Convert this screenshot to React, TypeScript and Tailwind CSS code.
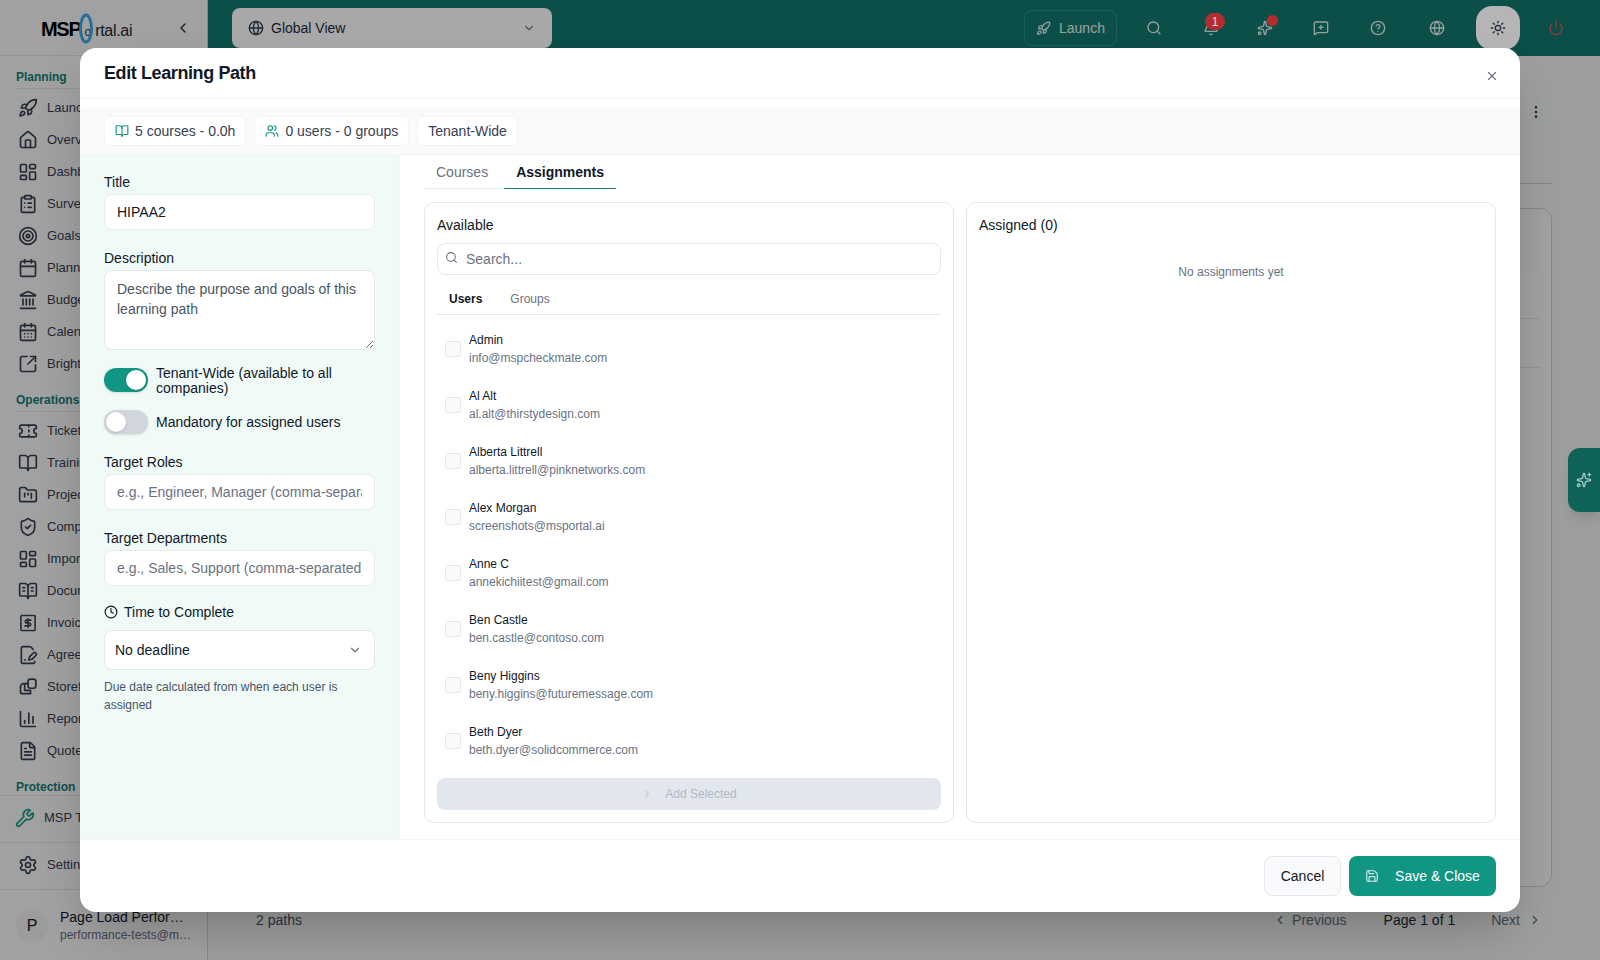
import React from "react";
import {
  Rocket, House, LayoutDashboard, ClipboardList, Target, Calendar, Landmark, CalendarDays, SquareArrowOutUpRight,
  Ticket, BookOpen, FolderKanban, ShieldCheck, BookOpenText, FilePenLine, ChartColumn, FileText, Wrench, Settings,
  ChevronLeft, ChevronRight, ChevronDown, Globe, Search, Bell, Sparkles, MessageSquarePlus, CircleHelp, Sun, Power,
  X, Users, Clock, Save, EllipsisVertical,
} from "lucide-react";

const InvoiceIcon = (p: { size?: number }) => (
  <svg width={p.size ?? 20} height={p.size ?? 20} viewBox="0 0 24 24" fill="none" stroke="currentColor" strokeWidth="2" strokeLinecap="round" strokeLinejoin="round">
    <rect x="3.5" y="3" width="17" height="18" rx="1" strokeDasharray="2 1.2" />
    <path d="M15.5 8.5h-5a1.75 1.75 0 0 0 0 3.5h3a1.75 1.75 0 0 1 0 3.5h-5" />
    <path d="M12 7v10" />
  </svg>
);

const StoreIcon = (p: { size?: number }) => (
  <svg width={p.size ?? 20} height={p.size ?? 20} viewBox="0 0 24 24" fill="none" stroke="currentColor" strokeWidth="2" strokeLinecap="round" strokeLinejoin="round">
    <rect x="12" y="2.5" width="9.5" height="11" rx="3" />
    <path d="M12 8H8v8h7v4H5a2 2 0 0 1-2-2v-6" />
    <path d="M3 12a4 4 0 0 1 4-4" />
  </svg>
);

type NavItem = { label: string; icon: React.ElementType };

const planning: NavItem[] = [
  { label: "Launchpad", icon: Rocket },
  { label: "Overview", icon: House },
  { label: "Dashboards", icon: LayoutDashboard },
  { label: "Surveys", icon: ClipboardList },
  { label: "Goals", icon: Target },
  { label: "Planner", icon: Calendar },
  { label: "Budgets", icon: Landmark },
  { label: "Calendar", icon: CalendarDays },
  { label: "BrightGauge", icon: SquareArrowOutUpRight },
];

const operations: NavItem[] = [
  { label: "Tickets", icon: Ticket },
  { label: "Training", icon: BookOpen },
  { label: "Projects", icon: FolderKanban },
  { label: "Compliance", icon: ShieldCheck },
  { label: "Imports", icon: LayoutDashboard },
  { label: "Documents", icon: BookOpenText },
  { label: "Invoices", icon: InvoiceIcon },
  { label: "Agreements", icon: FilePenLine },
  { label: "Storefront", icon: StoreIcon },
  { label: "Reports", icon: ChartColumn },
  { label: "Quotes", icon: FileText },
];

const people = [
  ["Admin", "info@mspcheckmate.com"],
  ["Al Alt", "al.alt@thirstydesign.com"],
  ["Alberta Littrell", "alberta.littrell@pinknetworks.com"],
  ["Alex Morgan", "screenshots@msportal.ai"],
  ["Anne C", "annekichiitest@gmail.com"],
  ["Ben Castle", "ben.castle@contoso.com"],
  ["Beny Higgins", "beny.higgins@futuremessage.com"],
  ["Beth Dyer", "beth.dyer@solidcommerce.com"],
];

function NavRow({ item }: { item: NavItem }) {
  const Icon = item.icon;
  return (
    <div className="flex h-8 items-center gap-[9px] pl-[18px] text-[13px] text-gray-700">
      <span className="flex w-5 justify-center text-gray-700">
        <Icon size={20} />
      </span>
      <span className="whitespace-nowrap">{item.label}</span>
    </div>
  );
}

function Sidebar() {
  return (
    <aside className="flex h-[960px] w-[208px] shrink-0 flex-col border-r border-gray-300 bg-white">
      <div className="relative flex h-14 shrink-0 items-center border-b border-gray-200 pl-[41px] pt-[2px]">
        <span className="whitespace-nowrap text-[16px] leading-none tracking-[-0.3px] text-gray-800">
          <span className="text-[20px] font-bold tracking-[-1.3px] text-black">MSP</span>
          <span className="ml-[4px] mr-[4px] text-[12px] tracking-normal">o</span>rtal.ai
        </span>
        <svg className="absolute left-[76px] top-[13px]" width="20" height="31" viewBox="0 0 20 31" fill="none">
          <ellipse cx="10" cy="15.5" rx="5.5" ry="13.5" stroke="#3fb0f5" strokeWidth="3" />
        </svg>
        <ChevronLeft size={16} className="absolute left-[175px] top-5 text-gray-800" />
      </div>
      <div className="h-[739px] shrink-0 overflow-hidden">
        <div className="mx-4 mt-[11px] h-[22px] border-b border-gray-200 text-xs font-semibold leading-5 text-[#14837a]">Planning</div>
        <div className="mt-[3px]">
          {planning.map((i) => (
            <NavRow key={i.label} item={i} />
          ))}
        </div>
        <div className="mx-4 mt-[10px] h-[22px] border-b border-gray-200 text-xs font-semibold leading-5 text-[#14837a]">Operations</div>
        <div className="mt-[3px]">
          {operations.map((i) => (
            <NavRow key={i.label} item={i} />
          ))}
        </div>
        <div className="mx-4 mt-[10px] h-[20px] text-xs font-semibold leading-5 text-[#14837a]">Protection</div>
      </div>
      <div className="flex h-[47px] shrink-0 items-center gap-[9px] border-t border-gray-200 pb-[2px] pl-[15px] text-[13px] text-gray-700">
        <Wrench size={20} className="text-[#14a08e]" />
        <span className="whitespace-nowrap">MSP Tools</span>
      </div>
      <div className="flex h-[47px] shrink-0 items-center gap-[9px] border-t border-gray-200 pb-[2px] pl-[18px] text-[13px] text-gray-700">
        <Settings size={20} />
        <span>Settings</span>
      </div>
      <div className="flex flex-1 items-start gap-3 border-t border-gray-200 pl-4 pt-[17px]">
        <div className="mt-[3px] flex h-8 w-8 shrink-0 items-center justify-center rounded-full bg-[#f8f8f8] text-base text-gray-900">P</div>
        <div className="w-[132px] min-w-0">
          <div className="truncate text-sm leading-[20px] text-gray-900">Page Load Performance</div>
          <div className="truncate text-xs leading-[17px] text-gray-500">performance-tests@msportal.ai</div>
        </div>
      </div>
    </aside>
  );
}

function TopBar() {
  const icon = "text-[#f0fffb]";
  return (
    <header className="flex h-14 shrink-0 items-center justify-between bg-[#147d72] pl-6 pr-2">
      <div className="relative z-[41] flex h-10 w-[320px] items-center rounded-lg bg-[#a8a8a8] pl-4 pr-4 text-sm text-gray-900">
        <Globe size={16} className="text-gray-800" />
        <span className="ml-[7px]">Global View</span>
        <ChevronDown size={14} className="ml-auto text-gray-600" />
      </div>
      <div className="flex items-center">
        <div className="flex h-9 w-[93px] items-center gap-2 rounded-lg border border-[#2a9b8f] pl-[11px] text-sm text-[#f0fffb]">
          <Rocket size={15} />
          <span>Launch</span>
        </div>
        <div className="flex w-[74px] justify-center">
          <Search size={16} className={icon} />
        </div>
        <div className="relative flex w-[40px] justify-center">
          <Bell size={16} className={icon} />
          <span className="absolute left-[14px] top-[-7px] z-[41] flex h-[17px] w-5 items-center justify-center rounded-full bg-[#b32d2f] text-xs text-[#f0d8d8]">1</span>
        </div>
        <div className="relative flex w-[68px] justify-center">
          <Sparkles size={16} className={icon} />
          <span className="absolute left-[36px] top-[-5px] z-[41] h-[11px] w-[11px] rounded-full bg-[#b32d2f]" />
        </div>
        <div className="flex w-[44px] justify-center">
          <MessageSquarePlus size={16} className={icon} />
        </div>
        <div className="flex w-[70px] justify-center">
          <CircleHelp size={16} className={icon} />
        </div>
        <div className="flex w-[48px] justify-center">
          <Globe size={16} className={icon} />
        </div>
        <div className="relative z-[41] ml-[15px] flex h-11 w-11 items-center justify-center rounded-2xl bg-[#b5b5b5] text-gray-800">
          <Sun size={16} />
        </div>
        <div className="flex w-[72px] justify-center">
          <Power size={16} className="text-[#e85c5c]" />
        </div>
      </div>
    </header>
  );
}

function Page() {
  return (
    <main className="flex min-w-0 flex-1 flex-col bg-[#f9fafb]">
      <TopBar />
      <div className="mx-12 flex h-[128px] shrink-0 items-start justify-end border-b border-gray-300">
        <EllipsisVertical size={16} className="mr-2 mt-[48px] text-gray-700" />
      </div>
      <div className="mx-12 mt-6 h-[679px] shrink-0 rounded-xl border border-gray-300 bg-white pr-[11px]">
        <div className="h-[62px] bg-gray-50" />
        <div className="h-[48px] border-b border-gray-200" />
        <div className="h-[49px] border-b border-gray-200" />
      </div>
      <div className="mx-12 flex h-[66px] items-center text-sm">
        <span className="text-gray-600">2 paths</span>
        <div className="ml-auto flex items-center text-gray-500">
          <ChevronLeft size={14} />
          <span className="ml-[5px]">Previous</span>
          <span className="ml-[37px] text-gray-800">Page 1 of 1</span>
          <span className="ml-[36px]">Next</span>
          <ChevronRight size={14} className="ml-2 mr-[10px]" />
        </div>
      </div>
    </main>
  );
}

function Field({ label, placeholder, value }: { label: string; placeholder?: string; value?: string }) {
  return (
    <div>
      <div className="text-sm leading-5 text-gray-900">{label}</div>
      <input
        readOnly
        defaultValue={value}
        placeholder={placeholder}
        className="mt-[2px] block h-9 w-full rounded-lg border border-[#e8edec] bg-white px-3 text-sm text-gray-900 outline-none placeholder:text-gray-500"
      />
    </div>
  );
}

function Toggle({ on }: { on: boolean }) {
  return (
    <span className={`flex h-6 w-11 shrink-0 items-center rounded-full p-[2px] shadow-sm ${on ? "justify-end bg-[#129684]" : "justify-start bg-gray-300"}`}>
      <span className="h-5 w-5 rounded-full bg-white shadow" />
    </span>
  );
}

function LeftPanel() {
  return (
    <div className="w-[320px] shrink-0 border-r border-gray-100 bg-[#f0faf7] px-6 pt-[17px]">
      <Field label="Title" value="HIPAA2" />
      <div className="mt-[18px]">
        <div className="text-sm leading-5 text-gray-900">Description</div>
        <textarea
          readOnly
          placeholder="Describe the purpose and goals of this learning path"
          className="mt-[2px] block h-[80px] w-full rounded-lg border border-gray-200 bg-white px-3 py-2 text-sm leading-5 outline-none placeholder:text-gray-600"
        />
      </div>
      <div className="mt-[18px] flex h-6 items-center gap-2">
        <Toggle on />
        <span className="mt-[1px] text-sm leading-[15px] text-gray-900">Tenant-Wide (available to all companies)</span>
      </div>
      <div className="mt-[18px] flex h-6 items-center gap-2">
        <Toggle on={false} />
        <span className="text-sm leading-[14px] text-gray-900">Mandatory for assigned users</span>
      </div>
      <div className="mt-[18px]">
        <Field label="Target Roles" placeholder="e.g., Engineer, Manager (comma-separated)" />
      </div>
      <div className="mt-[18px]">
        <Field label="Target Departments" placeholder="e.g., Sales, Support (comma-separated)" />
      </div>
      <div className="mt-[16px] flex h-5 items-center gap-[6px] text-sm text-gray-900">
        <Clock size={14} />
        <span>Time to Complete</span>
      </div>
      <div className="mt-2 flex h-[40px] items-center justify-between rounded-lg border border-gray-200 bg-white pl-[10px] pr-3 text-sm text-gray-900">
        <span>No deadline</span>
        <ChevronDown size={14} className="text-gray-500" />
      </div>
      <p className="mt-[8px] text-xs leading-[18px] text-gray-600">Due date calculated from when each user is assigned</p>
    </div>
  );
}

function Available() {
  return (
    <section className="flex w-[530px] flex-col rounded-[10px] border border-gray-200 p-3">
      <div className="text-sm leading-5 text-gray-900">Available</div>
      <div className="relative mt-2">
        <Search size={13} className="absolute left-2 top-2 text-gray-500" />
        <input
          readOnly
          placeholder="Search..."
          className="block h-8 w-full rounded-lg border border-gray-200 pl-7 pr-3 text-sm outline-none placeholder:text-gray-500"
        />
      </div>
      <div className="mt-2 flex h-8 gap-1 border-b border-gray-200 text-xs">
        <div className="flex items-center px-3 font-semibold text-gray-900">Users</div>
        <div className="flex items-center px-3 text-gray-500">Groups</div>
      </div>
      <ul className="mt-[6px] flex-1">
        {people.map(([name, mail]) => (
          <li key={mail} className="flex h-14 items-center gap-2 px-2">
            <span className="h-4 w-4 shrink-0 rounded-[3px] border border-gray-200 bg-gray-50" />
            <span className="text-xs leading-[18px]">
              <span className="block text-gray-900">{name}</span>
              <span className="block text-gray-500">{mail}</span>
            </span>
          </li>
        ))}
      </ul>
      <div className="flex h-8 items-center justify-center gap-3 rounded-lg bg-[#e2e7ee] text-xs font-medium text-[#b3b8c4]">
        <ChevronRight size={12} />
        <span>Add Selected</span>
      </div>
    </section>
  );
}

function Modal() {
  return (
    <div className="absolute left-20 top-12 z-50 flex h-[864px] w-[1440px] flex-col overflow-hidden rounded-2xl bg-white shadow-2xl">
      <div className="flex h-[51px] shrink-0 items-start justify-between border-b border-gray-100 pl-6 pr-[21px]">
        <h2 className="mt-[13px] text-lg font-semibold leading-6 tracking-[-0.4px] text-gray-900">Edit Learning Path</h2>
        <X size={14} className="mt-[21px] text-gray-500" />
      </div>
      <div className="mt-[9px] flex h-[47px] shrink-0 items-center gap-2 border-b border-gray-100 bg-gray-50 px-6 text-sm text-gray-700">
        <div className="flex h-[30px] items-center gap-[6px] rounded-md border border-gray-100 bg-white px-[10px]">
          <BookOpen size={14} className="text-[#129684]" />
          <span>5 courses - 0.0h</span>
        </div>
        <div className="flex h-[30px] items-center gap-[6px] rounded-md border border-gray-100 bg-white px-[10px]">
          <Users size={14} className="text-[#129684]" />
          <span>0 users - 0 groups</span>
        </div>
        <div className="flex h-[30px] items-center rounded-md border border-gray-100 bg-white px-[10px]">Tenant-Wide</div>
      </div>
      <div className="flex h-[684px] shrink-0">
        <LeftPanel />
        <div className="flex-1 px-6">
          <div className="inline-flex h-[34px] gap-1 border-b border-gray-200 text-sm">
            <div className="flex items-center pl-3 pr-3 text-gray-500">Courses</div>
            <div className="-mb-px flex items-center border-b border-[#14837a] px-3 font-semibold text-gray-900">Assignments</div>
          </div>
          <div className="mt-[13px] flex h-[621px] gap-3">
            <Available />
            <section className="w-[530px] rounded-[10px] border border-gray-200 p-3">
              <div className="text-sm leading-5 text-gray-900">Assigned (0)</div>
              <p className="mt-[29px] text-center text-xs leading-4 text-gray-500">No assignments yet</p>
            </section>
          </div>
        </div>
      </div>
      <div className="flex flex-1 items-center justify-end gap-2 border-t border-gray-100 px-6">
        <div className="flex h-10 w-[77px] items-center justify-center rounded-lg border border-gray-200 bg-gray-50 text-sm text-gray-900">Cancel</div>
        <div className="flex h-10 w-[147px] items-center justify-center gap-4 rounded-lg bg-[#129684] text-sm text-white">
          <Save size={14} className="text-white/80" />
          <span>Save &amp; Close</span>
        </div>
      </div>
    </div>
  );
}

export default function App() {
  return (
    <div className="relative flex h-[960px] w-[1600px] overflow-hidden bg-white [font-family:'Liberation_Sans',Arial,sans-serif]">
      <Sidebar />
      <Page />
      <div className="absolute inset-0 z-40 bg-black/[0.37]" />
      <div className="absolute right-0 top-[448px] z-[41] flex h-16 w-8 items-center justify-center rounded-l-xl bg-[#0d6358] text-[#a9c9c3] shadow-lg">
        <Sparkles size={16} />
      </div>
      <Modal />
    </div>
  );
}
